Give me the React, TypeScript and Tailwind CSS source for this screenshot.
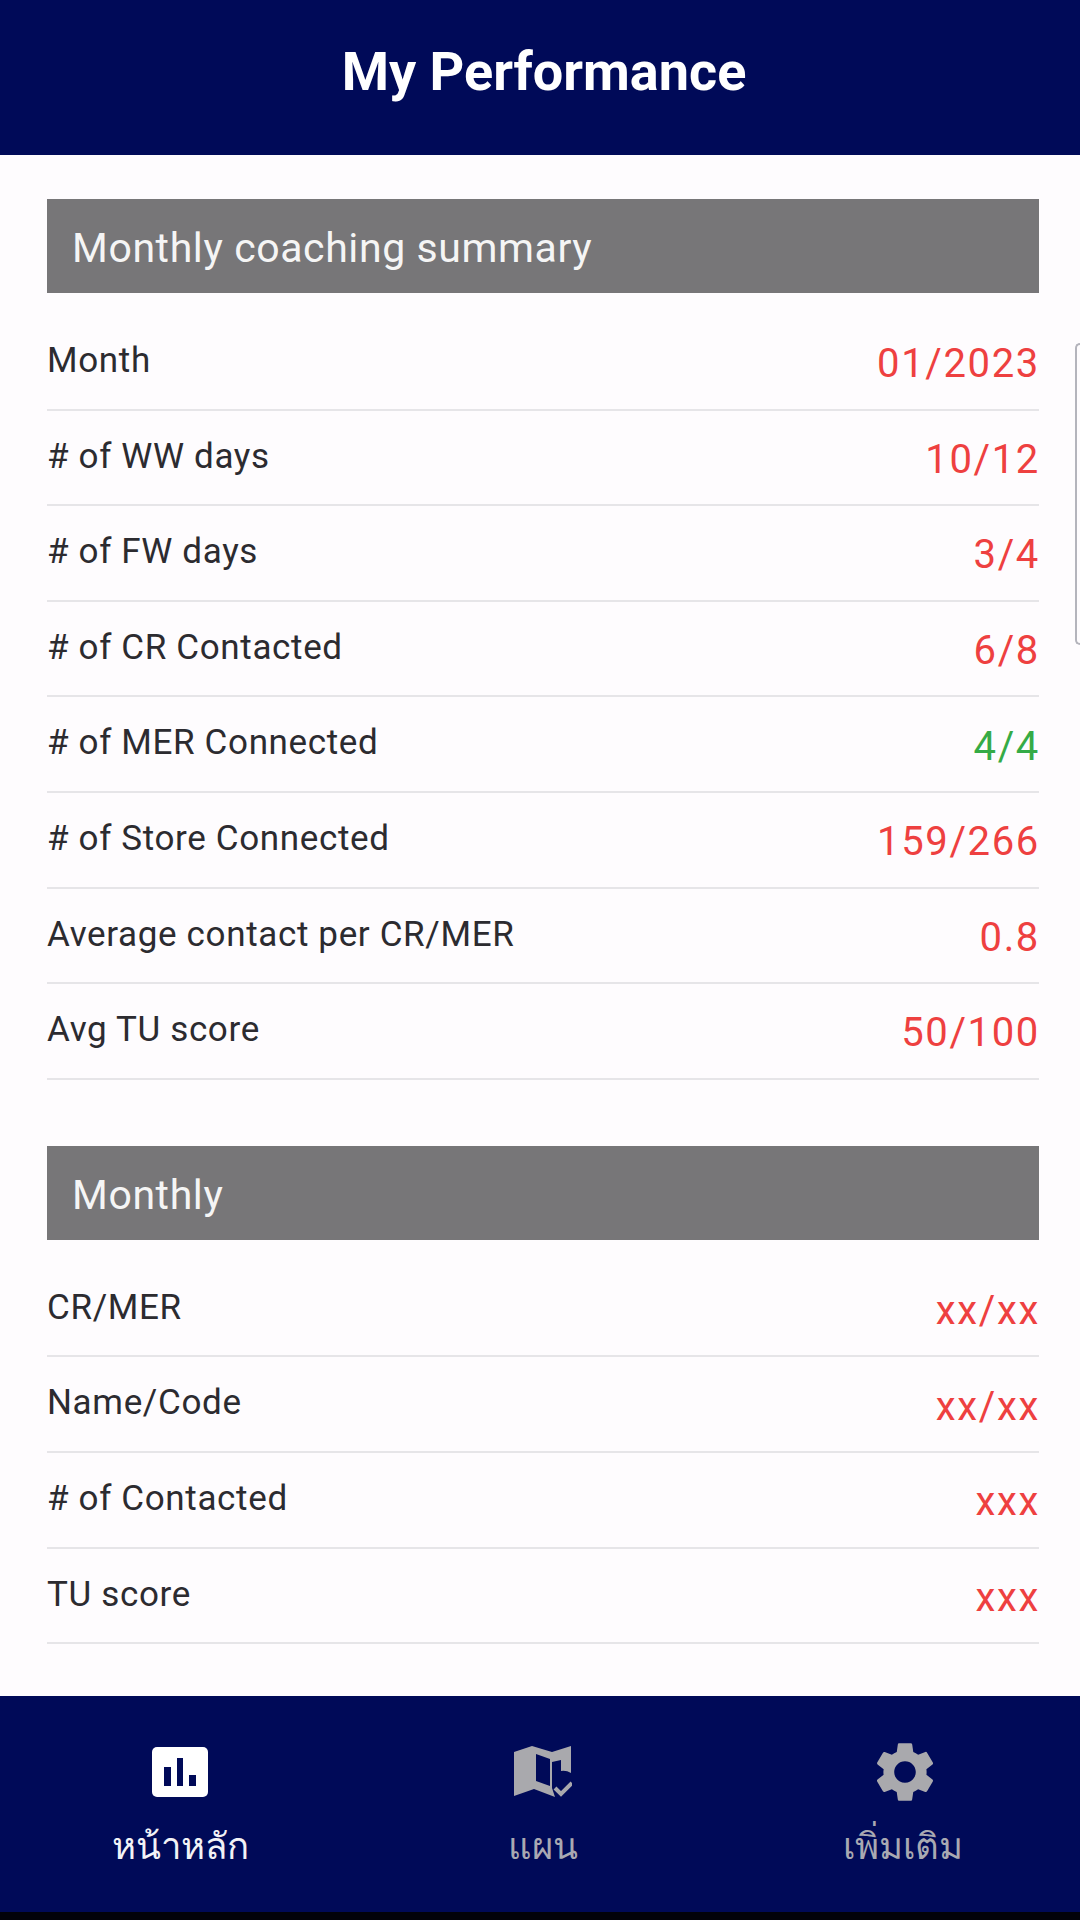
import type { ReactNode } from "react";
import { MdSettings } from "react-icons/md";

type Row = { label: string; value: string; good?: boolean };

const summary: Row[] = [
  { label: "Month", value: "01/2023" },
  { label: "# of WW days", value: "10/12" },
  { label: "# of FW days", value: "3/4" },
  { label: "# of CR Contacted", value: "6/8" },
  { label: "# of MER Connected", value: "4/4", good: true },
  { label: "# of Store Connected", value: "159/266" },
  { label: "Average contact per CR/MER", value: "0.8" },
  { label: "Avg TU score", value: "50/100" },
];

const monthly: Row[] = [
  { label: "CR/MER", value: "xx/xx" },
  { label: "Name/Code", value: "xx/xx" },
  { label: "# of Contacted", value: "xxx" },
  { label: "TU score", value: "xxx" },
];

function Section({ title, rows }: { title: string; rows: Row[] }) {
  return (
    <section>
      <h2 className="flex h-[94px] items-center bg-[#777678] px-[25px] pt-[5px] text-[41px] tracking-[0.6px] text-[#f5f5f5]">
        {title}
      </h2>
      <div className="mt-[22px]">
        {rows.map((r) => (
          <div
            key={r.label}
            className="flex h-[95.6px] items-center justify-between border-b-2 border-[#e6e5e8]"
          >
            <span className="-mt-[1px] text-[35px] tracking-[0.65px] text-[#2c2b30]">{r.label}</span>
            <span
              className={`-mr-[1px] mt-[5px] text-[40px] tracking-[1.65px] ${
                r.good ? "text-[#35ab46]" : "text-[#ee4040]"
              }`}
            >
              {r.value}
            </span>
          </div>
        ))}
      </div>
    </section>
  );
}

function NavItem({ icon, label, active }: { icon: ReactNode; label: string; active?: boolean }) {
  return (
    <div className="flex flex-col items-center">
      <div className="flex h-[64px] items-center justify-center">{icon}</div>
      <span
        className={`mt-[21px] text-[36.5px] leading-[44px] ${active ? "text-[#f2f2f6]" : "text-[#a9a9b2]"}`}
      >
        {label}
      </span>
    </div>
  );
}

export default function App() {
  return (
    <div className="flex h-[1920px] w-[1080px] flex-col overflow-hidden bg-[#fefcfe] font-['Roboto',sans-serif]">
      <header className="flex h-[155px] shrink-0 items-center justify-center bg-[#000a58] pb-[12px] pl-[8px]">
        <h1 className="text-[54px] font-bold text-white">My Performance</h1>
      </header>

      <main className="relative flex-1 pl-[47px] pr-[41px] pt-[44px]">
        <div className="flex flex-col gap-[66px]">
          <Section title="Monthly coaching summary" rows={summary} />
          <Section title="Monthly" rows={monthly} />
        </div>
        <div className="absolute right-0 top-[188px] h-[302px] w-[5px] rounded-l-[5px] border-y-2 border-l-2 border-[#b4b4bc]" />
      </main>

      <nav className="h-[216px] shrink-0 bg-[#000a58] pt-[44px]">
        <div className="grid w-full grid-cols-[360px_366px_354px] justify-items-center">
          <NavItem
            active
            label="หน้าหลัก"
            icon={
              <svg width="56" height="50" viewBox="0 0 56 50">
                <rect width="56" height="50" rx="5" fill="#ffffff" />
                <rect x="12" y="20" width="7" height="19" fill="#000a58" />
                <rect x="25" y="11" width="6" height="28" fill="#000a58" />
                <rect x="37" y="28" width="7" height="11" fill="#000a58" />
              </svg>
            }
          />
          <NavItem
            label="แผน"
            icon={
              <svg width="58" height="52" viewBox="0 0 58 52" fill="#a9a9ad">
                <path d="M0 6 L18 0 L38 6 L57 0 L57 27 A15 15 0 0 0 47 25 L47 14 L38 16 L38 42 L41 51 L20 43 L0 50 Z" />
                <path d="M22 8 L22 35 L36 40 L36 13 Z" fill="#000a58" />
                <path d="M41 42 L47 48 L58 37" fill="none" stroke="#a9a9ad" strokeWidth="4" />
              </svg>
            }
          />
          <NavItem label="เพิ่มเติม" icon={<MdSettings size={72} color="#a9a9ad" className="translate-x-[2px]" />} />
        </div>
      </nav>
      <div className="h-[8px] shrink-0 bg-[#02020a]" />
    </div>
  );
}
